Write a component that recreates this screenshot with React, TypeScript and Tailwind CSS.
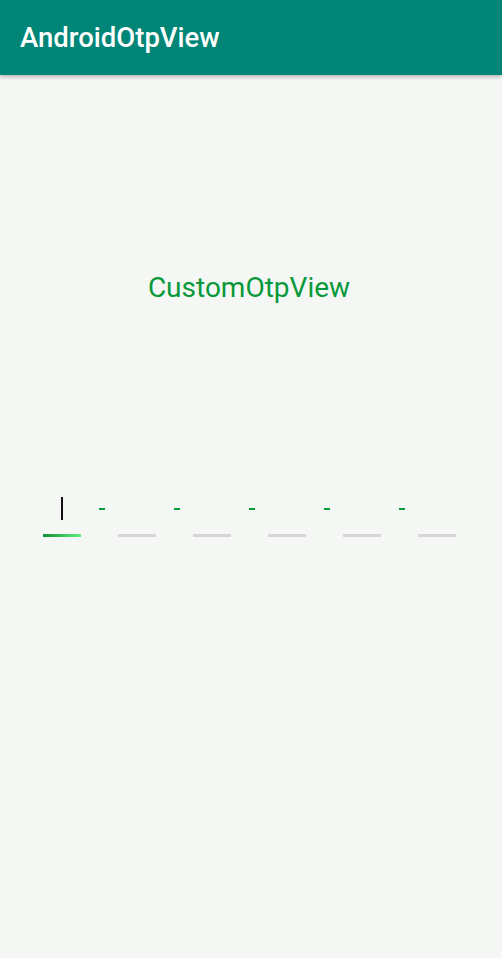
export default function App() {
  const boxes = [0, 1, 2, 3, 4, 5];
  return (
    <div className="flex h-[958px] w-[502px] flex-col bg-[#f5f7f5] font-['Roboto',sans-serif]">
      <header className="z-10 flex h-[75px] shrink-0 items-center bg-[#008577] pl-[20px] shadow-[0_2px_4px_rgba(0,0,0,0.25)]">
        <h1 className="text-[27.5px] font-medium text-white">AndroidOtpView</h1>
      </header>

      <main className="flex flex-col items-center">
        <p className="mt-[192px] mr-[4px] text-[28px] text-[#07993a]">CustomOtpView</p>

        <div className="mt-[188px] ml-[-4px] flex items-end">
          {boxes.map((i) => (
            <div key={i} className="flex items-end">
              {i > 0 && (
                <div className="flex h-[40px] w-[37px] items-start justify-center pl-[6px] pt-[11px]">
                  <span className="h-[2px] w-[6px] bg-[#079e38]" />
                </div>
              )}
              <div className="flex w-[38px] flex-col items-center">
                <div className="flex h-[37px] items-start justify-center">
                  {i === 0 && <span className="h-[23px] w-[2px] bg-[#111]" />}
                </div>
                <div
                  className={
                    i === 0
                      ? "h-[3px] w-full bg-gradient-to-r from-[#0b8f34] to-[#5ef07e]"
                      : "h-[3px] w-full bg-[#d6d6d6]"
                  }
                />
              </div>
            </div>
          ))}
        </div>
      </main>
    </div>
  );
}
